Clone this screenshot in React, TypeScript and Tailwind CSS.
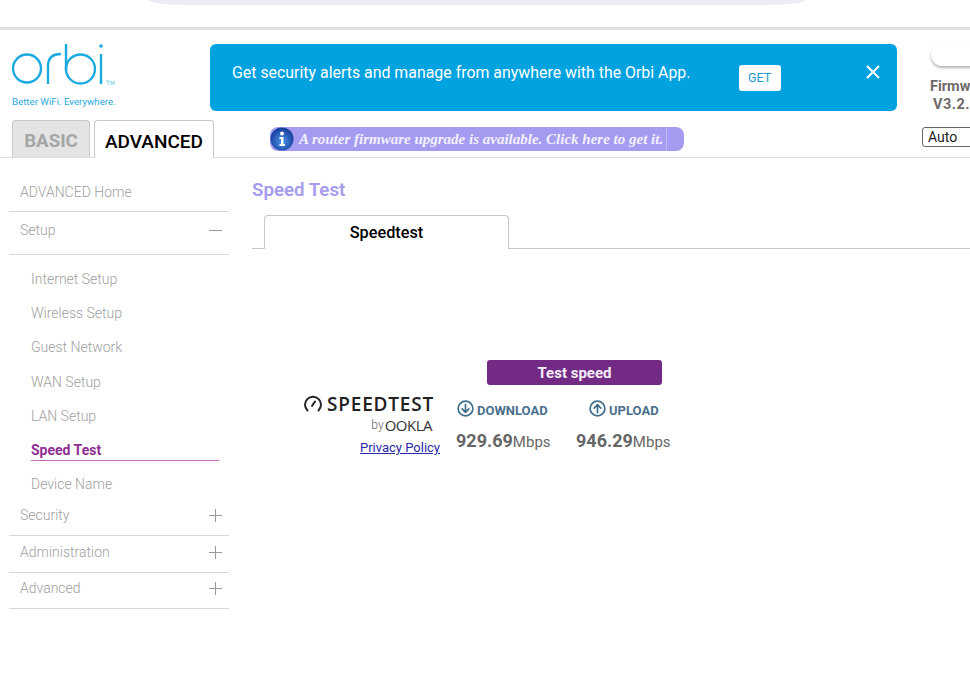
const sans = "font-['Roboto',sans-serif]";

function OrbiLogo() {
  return (
    <svg width="106" height="48" viewBox="0 0 106 48" fill="none" stroke="#1aa9e0" strokeWidth="2.4">
      <circle cx="15" cy="24.500" r="14" />
      <path d="M36 40V22C36 14 40 10 49 10" />
      <circle cx="68.500" cy="25" r="14.500" />
      <path d="M54 0V26" />
      <path d="M89 10V40" />
      <circle cx="89" cy="2" r="1.800" fill="#1aa9e0" stroke="none" />
      <path d="M94 37H98M96 37V41M99 41V37L100.500 40L102 37V41" stroke="#7cc9ea" strokeWidth="0.8" />
    </svg>
  );
}

function SpeedtestLogo() {
  return (
    <div className="flex w-[140px] flex-col items-end">
      <div className="flex h-[18px] items-center self-start pl-[3px]">
        <svg width="20" height="18" viewBox="0 0 20 18" fill="none" stroke="#222" strokeWidth="2" className="mr-[4px]">
          <path d="M4.500 15.500A8 8 0 1 1 15.500 15.500" strokeLinecap="round" />
          <path d="M9 11L12 6.500" strokeLinecap="round" />
        </svg>
        <span className="font-['Open_Sans',sans-serif] text-[19px] leading-[18px] font-semibold tracking-[0.8px] text-[#222]">SPEEDTEST</span>
      </div>
      <div className="mt-[4px] mr-[8px] flex h-[16px] items-center gap-[1px]">
        <span className={`${sans} text-[12px] leading-[14px] font-light text-[#666]`}>by</span>
        <span className="font-['Open_Sans',sans-serif] text-[15px] leading-[16px] tracking-[-0.5px] text-[#333]">OOKLA</span>
      </div>
    </div>
  );
}

function CircleArrow({ up }: { up?: boolean }) {
  return (
    <svg width="17" height="17" viewBox="0 0 18 18" fill="none" stroke="#3f6d8c" strokeWidth="1.800" strokeLinecap="round" strokeLinejoin="round">
      <circle cx="9" cy="9" r="7.800" />
      {up ? <path d="M9 13.500V5M5.500 8.500L9 5L12.500 8.500" /> : <path d="M9 4.500V13M5.500 9.500L9 13L12.500 9.500" />}
    </svg>
  );
}

function MenuRow({ label, icon, size = "normal" }: { label: string; icon?: "plus" | "minus"; size?: "normal" | "home" | "tall" }) {
  const rowSize = size === "tall" ? "h-[42.500px] pb-[4px]" : size === "home" ? "h-[36px] pb-[2px]" : "h-[36.500px] pb-[3px]";
  return (
    <div className={`flex items-center justify-between border-b border-[#d8d8d8] pr-[7px] pl-[11px] ${rowSize}`}>
      <span className="text-[14px] font-light text-[#a0a0a0]">{label}</span>
      {icon && (
        <svg width="13" height="13" viewBox="0 0 13 13" stroke="#999" strokeWidth="1">
          <path d="M0 6.500H13" />
          {icon === "plus" && <path d="M6.500 0V13" />}
        </svg>
      )}
    </div>
  );
}

function SubItem({ label, active }: { label: string; active?: boolean }) {
  return (
    <div className="mr-[10px] ml-[22px] flex h-[34.200px] items-center">
      {active ? (
        <span className="block w-full border-b border-[#c06cc0] text-[14px] leading-[20px] font-bold text-[#8f2f92]">{label}</span>
      ) : (
        <span className="text-[14px] font-light text-[#a0a0a0]">{label}</span>
      )}
    </div>
  );
}

export default function App() {
  return (
    <div className={`${sans} h-[676px] w-[970px] overflow-hidden bg-white`}>
      <div className="h-[30px] border-b-[3px] border-[#e2e2e2]">
        <div className="ml-[148px] h-[5px] w-[657px] rounded-br-[40px_5px] rounded-bl-[40px_5px] bg-[#ecedf2]" />
      </div>

      {/* header */}
      <div className="flex h-[128px] border-b border-[#dcdcdc]">
        <div className="w-[210px] shrink-0">
          <div className="pt-[14px] pl-[12px]">
            <OrbiLogo />
            <div className="mt-[3px] text-[9.700px] leading-[14px] text-[#2aa9dc]">Better WiFi. Everywhere.</div>
          </div>
          <div className="mt-[11px] ml-[12px] flex gap-1">
            <div className="flex h-[37px] w-[78px] shrink-0 items-center justify-center rounded-t-[4px] border border-b-0 border-[#c8c8c8] bg-[#e4e4e4] pt-[5px] text-[18.700px] font-bold text-[#a6a6a6]">
              BASIC
            </div>
            <div className="relative z-10 flex h-[38px] w-[120px] shrink-0 items-center justify-center rounded-t-[4px] border border-b-0 border-[#c8c8c8] bg-white pt-[5px] text-[19px] font-medium text-black">
              ADVANCED
            </div>
          </div>
        </div>

        <div className="min-w-0 flex-1 pt-[14px]">
          <div className="flex h-[67px] w-[687px] rounded-[6px] bg-[#00a2df] text-white">
            <span className="ml-[22px] pt-[19px] text-[15.900px] leading-[20px] whitespace-nowrap">Get security alerts and manage from anywhere with the Orbi App.</span>
            <div className="mt-[21px] ml-[48px] flex h-[26px] w-[42px] items-center justify-center rounded-[3px] bg-white text-[12.500px] text-[#1b97cf]">GET</div>
            <svg width="14" height="14" viewBox="0 0 14 14" stroke="white" strokeWidth="2" className="mt-[21px] ml-[85px]">
              <path d="M1 1L13 13M13 1L1 13" />
            </svg>
          </div>
          <div className="mt-[16px] ml-[60px] flex h-[24px] w-[414px] items-center rounded-[8px] bg-[#a59bf0]">
            <svg width="24" height="24" viewBox="0 0 24 24" className="shrink-0">
              <defs>
                <radialGradient id="infoBall" cx="0.5" cy="0.6" r="0.55">
                  <stop offset="0" stopColor="#4d96ea" />
                  <stop offset="1" stopColor="#173f9e" />
                </radialGradient>
              </defs>
              <circle cx="12" cy="12" r="11.500" fill="url(#infoBall)" />
              <circle cx="12" cy="6.500" r="2" fill="white" />
              <path d="M9.500 10H13.500V17H15V19H9.500V17H11V12H9.500Z" fill="white" />
            </svg>
            <span className="ml-[5px] w-[367px] shrink-0 font-['Liberation_Serif',serif] text-[15px] leading-[20px] font-bold whitespace-nowrap text-[#f3f1ff] italic">
              A router firmware upgrade is available. Click here to get it.
            </span>
            <div className="h-full border-l border-[#c4bdf6]" />
          </div>
        </div>

        <div className="w-[48px] shrink-0 overflow-hidden pt-[13px]">
          <div className="ml-[9px] h-[23px] w-[80px] rounded-[12px] bg-white shadow-[0_2px_3px_rgba(0,0,0,0.3)]" />
          <div className="mt-[12px] ml-[8px] w-[80px] text-[14.500px] leading-[18px] font-bold text-[#6f6a6a]">
            <div>Firmware</div>
            <div className="pl-[3px] tracking-[0.5px]">V3.2.1</div>
          </div>
          <div className="mt-[13px] h-[20px] w-[80px] rounded-[3px] border border-[#666] pl-[5px] text-[14px] leading-[18px] text-[#222]">Auto</div>
        </div>
      </div>

      <div className="flex">
        {/* side menu */}
        <div className="ml-[9px] w-[220px] shrink-0 pt-[18px]">
          <MenuRow label="ADVANCED Home" size="home" />
          <MenuRow label="Setup" icon="minus" size="tall" />
          <div className="h-[245px] pt-[8px]">
            <SubItem label="Internet Setup" />
            <SubItem label="Wireless Setup" />
            <SubItem label="Guest Network" />
            <SubItem label="WAN Setup" />
            <SubItem label="LAN Setup" />
            <SubItem label="Speed Test" active />
            <SubItem label="Device Name" />
          </div>
          <MenuRow label="Security" icon="plus" />
          <MenuRow label="Administration" icon="plus" />
          <MenuRow label="Advanced" icon="plus" />
        </div>

        {/* content */}
        <div className="ml-[23px] min-w-0 flex-1 pt-[21px]">
          <div className="text-[18.700px] leading-[22px] font-semibold text-[#a59bef]">Speed Test</div>
          <div className="mt-[14px] flex h-[34px] border-b border-[#c8c8c8]">
            <div className="ml-[12px] flex h-[34px] w-[245px] justify-center rounded-t-[4px] border border-b-0 border-[#c8c8c8] bg-white pt-[7px] text-[16.300px] leading-[20px] font-medium text-black">
              Speedtest
            </div>
          </div>

          <div className="mt-[111px] ml-[235px] flex h-[25px] w-[175px] items-center justify-center rounded-[3px] bg-[#732a85] pt-[1px] text-[15px] font-bold text-[#f4eef6]">
            Test speed
          </div>

          <div className="mt-[13px] flex">
            <div className="-mt-[3px] ml-[48px] flex w-[140px] flex-col items-end">
              <SpeedtestLogo />
              <a className="mt-[7px] text-[13px] leading-[16px] text-[#2a2aa5] underline">Privacy Policy</a>
            </div>
            <div className="ml-[16px] w-[120px]">
              <div className="flex h-[21px] items-center gap-[3px] pl-[1px]">
                <CircleArrow />
                <span className="mt-[5px] text-[13px] font-bold text-[#4a6f8c]">DOWNLOAD</span>
              </div>
              <div className="mt-[11px] leading-[22px] text-[#666]">
                <span className="text-[18px] font-bold">929.69</span>
                <span className="text-[15px]">Mbps</span>
              </div>
            </div>
            <div className="w-[110px]">
              <div className="flex h-[21px] items-center gap-[3px] pl-[13px]">
                <CircleArrow up />
                <span className="mt-[5px] text-[13px] font-bold text-[#4a6f8c]">UPLOAD</span>
              </div>
              <div className="mt-[11px] leading-[22px] text-[#666]">
                <span className="text-[18px] font-bold">946.29</span>
                <span className="text-[15px]">Mbps</span>
              </div>
            </div>
          </div>
        </div>
      </div>
    </div>
  );
}
